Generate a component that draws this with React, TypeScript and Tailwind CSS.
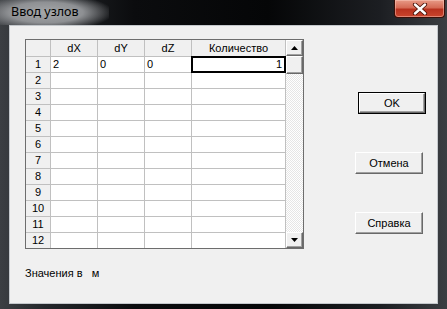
const colW = ["w-[25px]", "w-[47px]", "w-[47px]", "w-[47px]", "w-[94px]"];
const headers = ["", "dX", "dY", "dZ", "Количество"];
const rows = Array.from({ length: 12 }, (_, i) => i + 1);

function Arrow({ down }: { down?: boolean }) {
  return (
    <svg width="7" height="4" viewBox="0 0 7 4">
      <polygon points={down ? "0,0 7,0 3.5,4" : "3.5,0 7,4 0,4"} fill="#000" />
    </svg>
  );
}

function ScrollButton({ children, h }: { children?: React.ReactNode; h: string }) {
  return (
    <div
      className={`${h} flex items-center justify-center bg-[#f0f0f0] border border-t-white border-l-white border-b-[#696969] border-r-[#696969] shadow-[inset_-1px_-1px_0_#a0a0a0]`}
    >
      {children}
    </div>
  );
}

function WinButton({ label, def }: { label: string; def?: boolean }) {
  return (
    <div className={`w-[68px] h-[22px] ${def ? "border border-black" : ""}`}>
      <div className="w-full h-full flex items-center justify-center bg-[#f0f0f0] border border-t-white border-l-white border-b-[#696969] border-r-[#696969] shadow-[inset_-1px_-1px_0_#a0a0a0] text-[11px] text-black">
        {label}
      </div>
    </div>
  );
}

export default function App() {
  return (
    <div className="w-[447px] h-[309px] overflow-hidden flex flex-col bg-[linear-gradient(90deg,#3c3f43_0%,#24272b_10%,#0b0c0e_30%,#050607_60%,#1c1e22_85%,#3b3e42_100%)] font-['Liberation_Sans',Arial,sans-serif]">
      {/* title bar */}
      <div className="h-[25px] flex items-start">
        <div className="h-[25px] flex items-center pl-[11px] pr-[30px] bg-[radial-gradient(ellipse_62%_75%_at_42%_50%,#a6a8aa_0%,#8e9093_55%,rgba(70,72,75,0)_100%)]">
          <span className="text-[12.5px] text-black font-['Segoe_UI','Noto_Sans',sans-serif]">
            Ввод узлов
          </span>
        </div>
        <div className="ml-auto mr-[2px] w-[51px] h-[18px] rounded-b-[4px] border border-t-0 border-[#3a0f08] bg-[linear-gradient(180deg,#e79a87_0%,#d56a55_45%,#b8321f_55%,#c9452d_100%)] shadow-[inset_0_0_0_1px_rgba(255,210,200,0.45)] flex items-center justify-center">
          <svg width="16" height="12" viewBox="0 0 16 12">
            <path d="M3 1.5 L13 10.5 M13 1.5 L3 10.5" stroke="#4a1208" strokeWidth="4.2" strokeLinecap="round" />
            <path d="M3 1.5 L13 10.5 M13 1.5 L3 10.5" stroke="#fff" strokeWidth="2.4" strokeLinecap="round" />
          </svg>
        </div>
      </div>

      {/* client area */}
      <div className="mx-[9px] h-[279px] border border-[#c4c8cc] bg-[#f0f0f0] flex">
        <div className="pl-[15px] pt-[13px] flex flex-col">
          <div className="w-[279px] h-[210px] border border-[#6d6d6d] flex overflow-hidden">
            <div className="flex flex-col">
              <div className="flex h-[17px] shrink-0">
                {headers.map((h, i) => (
                  <div
                    key={i}
                    className={`${colW[i]} h-[17px] bg-[#f0f0f0] border-r border-b border-[#c0c0c0] flex items-center justify-center text-[11px] text-black`}
                  >
                    {h}
                  </div>
                ))}
              </div>
              {rows.map((r) => (
                <div key={r} className="flex h-[16px] shrink-0">
                  <div className="w-[25px] h-[16px] bg-[#f0f0f0] border-r border-b border-[#c0c0c0] flex items-center justify-center text-[11px] text-black">
                    {r}
                  </div>
                  {[1, 2, 3].map((c) => (
                    <div
                      key={c}
                      className={`${colW[c]} h-[16px] bg-white border-r border-b border-[#c0c0c0] flex items-center pl-[2px] text-[11px] text-black`}
                    >
                      {r === 1 ? (c === 1 ? "2" : "0") : ""}
                    </div>
                  ))}
                  <div className="w-[94px] h-[16px] bg-white border-r border-b border-[#c0c0c0] relative flex items-center justify-end pr-[3px] text-[11px] text-black">
                    {r === 1 && (
                      <>
                        <span className="absolute -left-[1px] -top-[1px] w-[95px] h-[17px] border-2 border-black" />
                        1
                      </>
                    )}
                  </div>
                </div>
              ))}
            </div>
            <div className="w-[17px] flex flex-col">
              <ScrollButton h="h-[16px]">
                <Arrow />
              </ScrollButton>
              <ScrollButton h="h-[18px]" />
              <div className="flex-1 bg-[repeating-conic-gradient(#ffffff_0_25%,#e6e6e6_0_50%)] bg-[length:2px_2px]" />
              <ScrollButton h="h-[16px]">
                <Arrow down />
              </ScrollButton>
            </div>
          </div>
          <div className="mt-[16px] text-[11px] text-black whitespace-pre">Значения в   м</div>
        </div>

        <div className="ml-[51px] pt-[66px] flex flex-col">
          <div className="ml-[3px]">
            <WinButton label="OK" def />
          </div>
          <div className="mt-[38px]">
            <WinButton label="Отмена" />
          </div>
          <div className="mt-[38px]">
            <WinButton label="Справка" />
          </div>
        </div>
      </div>
    </div>
  );
}
